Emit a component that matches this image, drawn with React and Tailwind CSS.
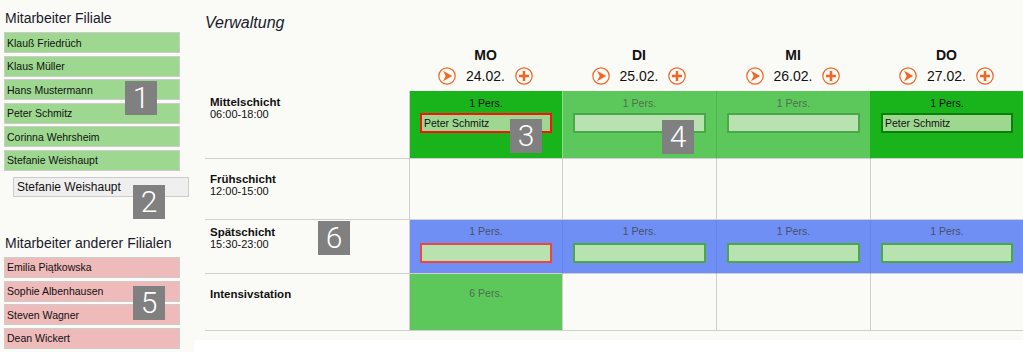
const branchStaff = [
  'Klauß Friedrüch',
  'Klaus Müller',
  'Hans Mustermann',
  'Peter Schmitz',
  'Corinna Wehrsheim',
  'Stefanie Weishaupt',
];

const otherStaff = ['Emilia Piątkowska', 'Sophie Albenhausen', 'Steven Wagner', 'Dean Wickert'];

const days = [
  { name: 'MO', date: '24.02.' },
  { name: 'DI', date: '25.02.' },
  { name: 'MI', date: '26.02.' },
  { name: 'DO', date: '27.02.' },
];

const EMPTY = { cls: 'border-l-[#cfcfcf]' };

const rows = [
  {
    name: 'Mittelschicht',
    time: '06:00-18:00',
    h: 'h-[68px]',
    labelPt: 'pt-[5px]',
    cellPt: 'pt-[5.5px]',
    slotMt: 'mt-[3.5px]',
    cells: [
      { cls: 'bg-[#19b41c] border-l-[#cfcfcf]', pers: '1 Pers.', persCls: 'text-[#111]', slot: { cls: 'border-[#ff1010] bg-[#9ed890]', name: 'Peter Schmitz' } },
      { cls: 'bg-[#5cc85c] border-l-[#8fdc8f]', pers: '1 Pers.', persCls: 'text-[#4f6f4f]', slot: { cls: 'border-[#4ba848] bg-[#b8e2b0]' } },
      { cls: 'bg-[#5cc85c] border-l-[#4cb84c]', pers: '1 Pers.', persCls: 'text-[#4f6f4f]', slot: { cls: 'border-[#4ba848] bg-[#b8e2b0]' } },
      { cls: 'bg-[#19b41c] border-l-[#19b41c]', pers: '1 Pers.', persCls: 'text-[#111]', slot: { cls: 'border-[#08800a] bg-[#9ed890]', name: 'Peter Schmitz' } },
    ],
  },
  {
    name: 'Frühschicht',
    time: '12:00-15:00',
    h: 'h-[61px]',
    labelPt: 'pt-[13.5px]',
    cellPt: 'pt-[5px]',
    slotMt: 'mt-[5px]',
    cells: [EMPTY, EMPTY, EMPTY, EMPTY],
  },
  {
    name: 'Spätschicht',
    time: '15:30-23:00',
    h: 'h-[54px]',
    labelPt: 'pt-[6px]',
    cellPt: 'pt-[5px]',
    slotMt: 'mt-[5px]',
    cells: [
      { cls: 'bg-[#6f8ff5] border-l-[#cfcfcf]', pers: '1 Pers.', persCls: 'text-[#4a4f66]', slot: { cls: 'border-[#ee4444] bg-[#b8e2b0]' } },
      { cls: 'bg-[#6f8ff5] border-l-[#6383ee]', pers: '1 Pers.', persCls: 'text-[#4a4f66]', slot: { cls: 'border-[#4ba848] bg-[#b8e2b0]' } },
      { cls: 'bg-[#6f8ff5] border-l-[#6383ee]', pers: '1 Pers.', persCls: 'text-[#4a4f66]', slot: { cls: 'border-[#4ba848] bg-[#b8e2b0]' } },
      { cls: 'bg-[#6f8ff5] border-l-[#6383ee]', pers: '1 Pers.', persCls: 'text-[#4a4f66]', slot: { cls: 'border-[#4ba848] bg-[#b8e2b0]' } },
    ],
  },
  {
    name: 'Intensivstation',
    h: 'h-[57px]',
    labelPt: 'pt-[14px]',
    cellPt: 'pt-[13px]',
    slotMt: 'mt-[5px]',
    cells: [
      { cls: 'bg-[#5cc85c] border-l-[#cfcfcf]', pers: '6 Pers.', persCls: 'text-[#4f6f4f]' },
      EMPTY,
      EMPTY,
      EMPTY,
    ],
  },
];

const badges = [
  { n: '1', cls: 'left-[125px] top-[81px]' },
  { n: '2', cls: 'left-[133px] top-[185px]' },
  { n: '3', cls: 'left-[510px] top-[119px]' },
  { n: '4', cls: 'left-[662px] top-[120px]' },
  { n: '5', cls: 'left-[133px] top-[286px]' },
  { n: '6', cls: 'left-[318px] top-[221px]' },
];

function ArrowIcon() {
  return (
    <svg width="18" height="18" viewBox="0 0 18 18">
      <circle cx="9" cy="9" r="8.2" fill="none" stroke="#f26522" strokeWidth="1.2" />
      <path d="M5 3.8 L14.2 9 L5 14.2 L7.7 9 Z" fill="#f26522" />
    </svg>
  );
}

function PlusIcon() {
  return (
    <svg width="18" height="18" viewBox="0 0 18 18">
      <circle cx="9" cy="9" r="8.2" fill="none" stroke="#f26522" strokeWidth="1.2" />
      <path d="M9 4 V14 M4 9 H14" stroke="#f26522" strokeWidth="2.5" />
    </svg>
  );
}

function StaffItem({ name, color }) {
  return (
    <div className={`flex h-[21px] items-center border border-[#cccccc] pl-[2px] text-[10.5px] leading-[13px] text-[#111] ${color}`}>
      <span className="pt-[1px]">{name}</span>
    </div>
  );
}

export default function App() {
  return (
    <div className="relative h-[357px] w-[1023px] overflow-hidden bg-white font-['Liberation_Sans',Arial,sans-serif] text-[#222]">
      <div className="flex items-start">
        {/* Seitenleiste */}
        <aside className="h-[352px] w-[194px] bg-[#fafaf7] pl-[4px] pt-[10px]">
          <h2 className="pl-[1px] text-[14px] leading-[16px] text-[#1a1a2a]">Mitarbeiter Filiale</h2>
          <div className="mt-[6px] flex w-[176px] flex-col gap-[2.6px]">
            {branchStaff.map((n) => (
              <StaffItem key={n} name={n} color="bg-[#9ed890]" />
            ))}
          </div>
          <div className="ml-[9px] mt-[6px] flex h-[20px] w-[176px] items-center border border-[#cccccc] bg-[#efefef] pl-[3px] text-[12px] leading-[14px] text-[#111]">
            Stefanie Weishaupt
          </div>
          <h2 className="mt-[38.5px] pl-[1px] text-[14px] leading-[16px] text-[#1a1a2a]">Mitarbeiter anderer Filialen</h2>
          <div className="mt-[5.5px] flex w-[176px] flex-col gap-[2.6px]">
            {otherStaff.map((n) => (
              <StaffItem key={n} name={n} color="bg-[#eebaba]" />
            ))}
          </div>
        </aside>

        {/* Verwaltung */}
        <main className="h-[340px] flex-1 bg-[#fafaf7] pl-[11px] pt-[13px]">
          <h1 className="text-[16px] italic leading-[20px] text-[#1a1a2a]">Verwaltung</h1>
          <div className="grid grid-cols-[204px_153px_154px_154px_1fr]">
            <div />
            {days.map((d) => (
              <div key={d.name} className="flex flex-col items-center pb-[6px] pt-[14px]">
                <div className="text-[14px] font-bold leading-[16px] text-[#111]">{d.name}</div>
                <div className="mt-[4px] flex h-[18px] items-center gap-[10px]">
                  <ArrowIcon />
                  <span className="text-[14px] leading-[18px] text-[#111]">{d.date}</span>
                  <PlusIcon />
                </div>
              </div>
            ))}

            {rows.map((r) => [
              <div key={r.name} className={`${r.h} ${r.labelPt} border-b border-b-[#cfcfcf] pl-[5px] text-[11px] leading-[12px] text-[#111]`}>
                <div className="text-[11.5px] font-bold">{r.name}</div>
                {r.time && <div>{r.time}</div>}
              </div>,
              ...r.cells.map((c, i) => (
                <div key={r.name + i} className={`${r.h} ${r.cellPt} ${c.cls} border-b border-l border-b-[#cfcfcf]`}>
                  {c.pers && (
                    <div className={`text-center text-[10.5px] leading-[13px] ${c.persCls}`}>{c.pers}</div>
                  )}
                  {c.slot && (
                    <div className={`${r.slotMt} mx-[10px] flex h-[20px] items-center border-2 pl-[2px] text-[10.5px] leading-[13px] text-[#111] ${c.slot.cls}`}>
                      {c.slot.name}
                    </div>
                  )}
                </div>
              )),
            ])}
          </div>
        </main>
      </div>

      {badges.map((b) => (
        <div
          key={b.n}
          className={`absolute ${b.cls} flex h-[34px] w-[32px] items-center justify-center bg-[#808080] font-['Roboto',sans-serif] text-[30px] font-light leading-[34px] text-white`}
        >
          {b.n}
        </div>
      ))}
    </div>
  );
}
